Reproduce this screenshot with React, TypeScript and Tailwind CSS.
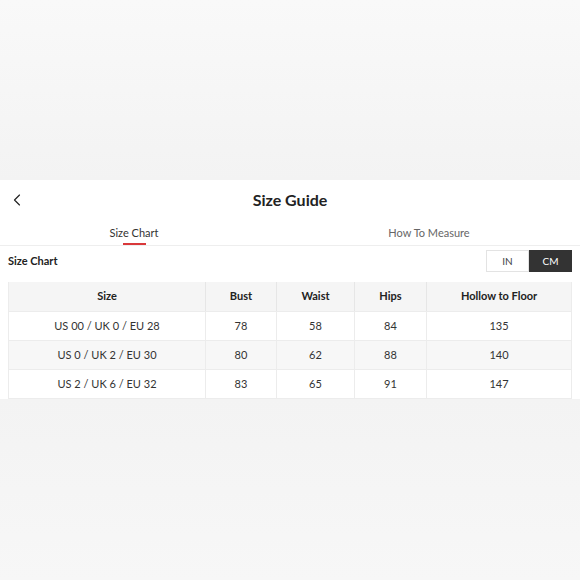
import { ChevronLeft } from 'lucide-react'

const rows = [
  ['US 00 / UK 0 / EU 28', '78', '58', '84', '135'],
  ['US 0 / UK 2 / EU 30', '80', '62', '88', '140'],
  ['US 2 / UK 6 / EU 32', '83', '65', '91', '147'],
  ['', '', '', '', ''],
]

const cols = ['w-[197px]', 'w-[71px]', 'w-[78px]', 'w-[72px]', 'flex-1']

export default function App() {
  return (
    <div className="flex h-[580px] w-[580px] flex-col bg-[#f5f5f5] font-['Lato',sans-serif] text-[#333]">
      {/* backdrop above the sheet */}
      <div className="h-[180px] shrink-0 bg-gradient-to-b from-[#f9f9f9] to-[#f3f3f3]" />

      {/* sheet */}
      <div className="flex h-[219px] shrink-0 flex-col overflow-hidden bg-white">
        <div className="relative flex h-[40px] shrink-0 items-center justify-center">
          <ChevronLeft className="absolute left-[7px] top-[10px] h-[20px] w-[20px] text-[#222]" strokeWidth={1.4} />
          <h1 className="text-[16px] font-bold text-[#222]">Size Guide</h1>
        </div>

        <div className="flex h-[26px] shrink-0 border-b border-[#eeeeee] text-[11px]">
          <div className="relative flex w-[268px] items-start justify-center pt-[5px] text-[#333]">
            Size Chart
            <span className="absolute bottom-[0px] left-[123px] h-[2px] w-[23px] bg-[#d9383a]" />
          </div>
          <div className="flex flex-1 items-start justify-center pl-[10px] pt-[5px] text-[#666]">How To Measure</div>
        </div>

        <div className="flex shrink-0 items-center justify-between px-[8px] pt-[4px]">
          <span className="text-[11px] font-bold text-[#222]">Size Chart</span>
          <div className="flex h-[22px] text-[10px]">
            <div className="flex w-[43px] items-center justify-center border border-[#e3e3e3] bg-white text-[#444]">IN</div>
            <div className="flex w-[43px] items-center justify-center bg-[#333] text-white">CM</div>
          </div>
        </div>

        <div className="mx-[8px] mt-[10px] shrink-0 border-l border-r border-[#ececec] text-[11px]">
          <div className="flex h-[29px] bg-[#f5f5f5] font-bold text-[#222]">
            {['Size', 'Bust', 'Waist', 'Hips', 'Hollow to Floor'].map((h, i) => (
              <div
                key={h}
                className={`${cols[i]} flex items-center justify-center border-r border-[#e6e6e6] last:border-r-0`}
              >
                {h}
              </div>
            ))}
          </div>
          {rows.map((r, ri) => (
            <div
              key={ri}
              className={`flex h-[29px] border-t border-[#ececec] text-[#333] ${ri % 2 === 1 ? 'bg-[#f7f7f7]' : 'bg-white'}`}
            >
              {r.map((c, i) => (
                <div
                  key={i}
                  className={`${cols[i]} flex items-center justify-center border-r border-[#ececec] last:border-r-0`}
                >
                  {c}
                </div>
              ))}
            </div>
          ))}
        </div>
      </div>

      <div className="flex-1 bg-gradient-to-b from-[#f3f3f3] to-[#f7f7f7]" />
    </div>
  )
}
